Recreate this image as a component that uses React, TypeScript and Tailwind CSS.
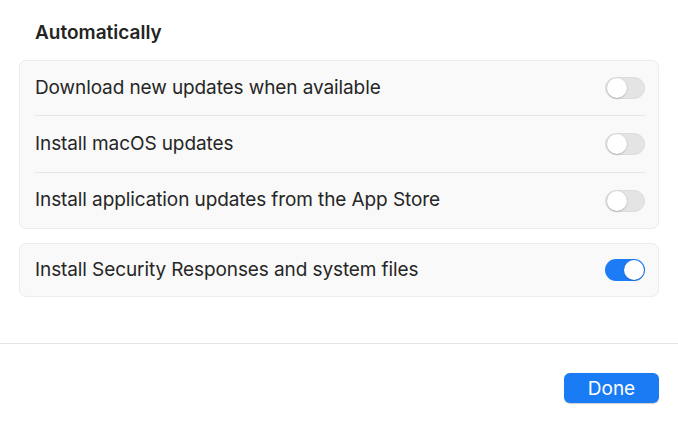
import React from "react";

interface Setting {
  id: number;
  label: string;
  on: boolean;
}

const autoSettings: Setting[] = [
  { id: 1, label: "Download new updates when available", on: false },
  { id: 2, label: "Install macOS updates", on: false },
  { id: 3, label: "Install application updates from the App Store", on: false },
];

const Toggle: React.FC<{ on: boolean }> = ({ on }) => (
  <div
    className={`w-[40px] h-[22px] rounded-full p-[1px] flex items-center ${
      on ? "bg-[#1b7cf6] justify-end" : "bg-[#e4e4e4] justify-start border border-[#dcdcdc]"
    }`}
  >
    <div className="w-[20px] h-[20px] rounded-full bg-white shadow-[0_0.5px_1.5px_rgba(0,0,0,0.3)]" />
  </div>
);

const App: React.FC = () => {
  return (
    <div
      className="w-[678px] h-[427px] bg-white text-[#262626] flex flex-col"
      style={{ fontFamily: "Inter, 'Noto Sans', sans-serif" }}
    >
      <div className="px-[19px] pt-[21px]">
        {/* Header */}
        <h2 className="px-[16px] text-[19px] font-semibold leading-[24px] text-[#242424]">
          Automatically
        </h2>

        {/* Auto settings */}
        <div className="mt-[15px] rounded-[7px] bg-[#f9f9f9] border border-[#ececec] pl-[15px] pr-[13px]">
          {autoSettings.map((s, i) => (
            <div
              key={s.id}
              className={`flex items-center justify-between ${
                i === 1 ? "h-[57px]" : "h-[55px]"
              } ${i < autoSettings.length - 1 ? "border-b border-[#e6e6e6]" : ""}`}
            >
              <span className="text-[19px] tracking-[-0.1px]">{s.label}</span>
              <Toggle on={s.on} />
            </div>
          ))}
        </div>

        {/* Security responses */}
        <div className="mt-[14px] h-[54px] rounded-[7px] bg-[#f9f9f9] border border-[#ececec] pl-[15px] pr-[13px] flex items-center justify-between">
          <span className="text-[19px] tracking-[-0.1px]">Install Security Responses and system files</span>
          <Toggle on />
        </div>
      </div>

      {/* Footer */}
      <div className="mt-[46px] border-t border-[#e5e5e5] flex justify-end px-[19px] pt-[29px]">
        <button className="w-[95px] h-[30px] rounded-[6px] bg-[#1a7cf5] text-white text-[19px] leading-none shadow-[0_0.5px_1px_rgba(0,0,0,0.2)]">
          Done
        </button>
      </div>
    </div>
  );
};

export default App;
